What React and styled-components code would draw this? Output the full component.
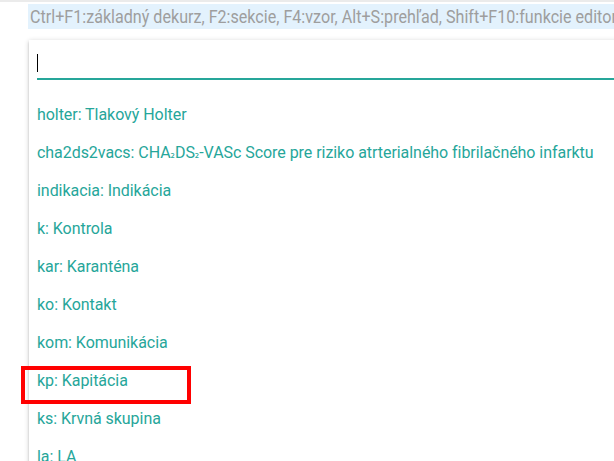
import React from "react";
import styled, { createGlobalStyle } from "styled-components";

const Global = createGlobalStyle`
  html, body {
    margin: 0;
    padding: 0;
    background: #ffffff;
    overflow: hidden;
  }
  body {
    font-family: Roboto, "Liberation Sans", sans-serif;
  }
`;

const Page = styled.div`
  position: relative;
  width: 614px;
  height: 461px;
  overflow: hidden;
`;

const TopRule = styled.div`
  height: 2px;
  background: #ebebeb;
`;

const HintBar = styled.div`
  margin: 2px 0 0 28px;
  height: 25px;
  line-height: 25px;
  padding-left: 2px;
  background: #e3f2fd;
  white-space: nowrap;
  width: 700px;
  overflow: hidden;
`;

const HintText = styled.span`
  display: inline-block;
  color: #9e9e9e;
  font-size: 18px;
  transform: scaleX(0.895);
  transform-origin: left center;
`;

const Card = styled.div`
  margin: 11px 0 0 29px;
  width: 700px;
  background: #fff;
  padding: 0 8px;
  box-shadow: 0 2px 2px 0 rgba(0, 0, 0, 0.14), 0 3px 1px -2px rgba(0, 0, 0, 0.12),
    0 1px 5px 0 rgba(0, 0, 0, 0.2);
  min-height: 500px;
`;

const InputRow = styled.div`
  height: 38px;
  border-bottom: 2px solid #26a69a;
  display: flex;
  align-items: flex-start;
`;

const Caret = styled.span`
  display: block;
  width: 1px;
  height: 18px;
  margin-top: 14px;
  background: #000;
`;

const List = styled.ul`
  list-style: none;
  margin: 0;
  padding: 16px 0 0;
`;

const Item = styled.li`
  height: 38px;
  line-height: 38px;
  font-size: 16px;
  color: #26a69a;
  white-space: nowrap;
  letter-spacing: -0.05px;
`;

const Sub = styled.span`
  font-family: "DejaVu Sans", sans-serif;
  font-size: 11px;
`;

const Highlight = styled.div`
  position: absolute;
  left: 21px;
  top: 366px;
  width: 162px;
  height: 30px;
  border: 4px solid #ff0000;
`;

const items = [
  "holter: Tlakový Holter",
  [
    "cha2ds2vacs: CHA",
    <Sub key="a">₂</Sub>,
    "DS",
    <Sub key="b">₂</Sub>,
    "-VASc Score pre riziko atrterialného fibrilačného infarktu",
  ],
  "indikacia: Indikácia",
  "k: Kontrola",
  "kar: Karanténa",
  "ko: Kontakt",
  "kom: Komunikácia",
  "kp: Kapitácia",
  "ks: Krvná skupina",
  "la: LA",
];

export default function App() {
  return (
    <Page>
      <Global />
      <TopRule />
      <HintBar>
        <HintText>
          Ctrl+F1:základný dekurz, F2:sekcie, F4:vzor, Alt+S:prehľad, Shift+F10:funkcie editora
        </HintText>
      </HintBar>
      <Card>
        <InputRow>
          <Caret />
        </InputRow>
        <List>
          {items.map((t, i) => (
            <Item key={i}>{t}</Item>
          ))}
        </List>
      </Card>
      <Highlight />
    </Page>
  );
}
